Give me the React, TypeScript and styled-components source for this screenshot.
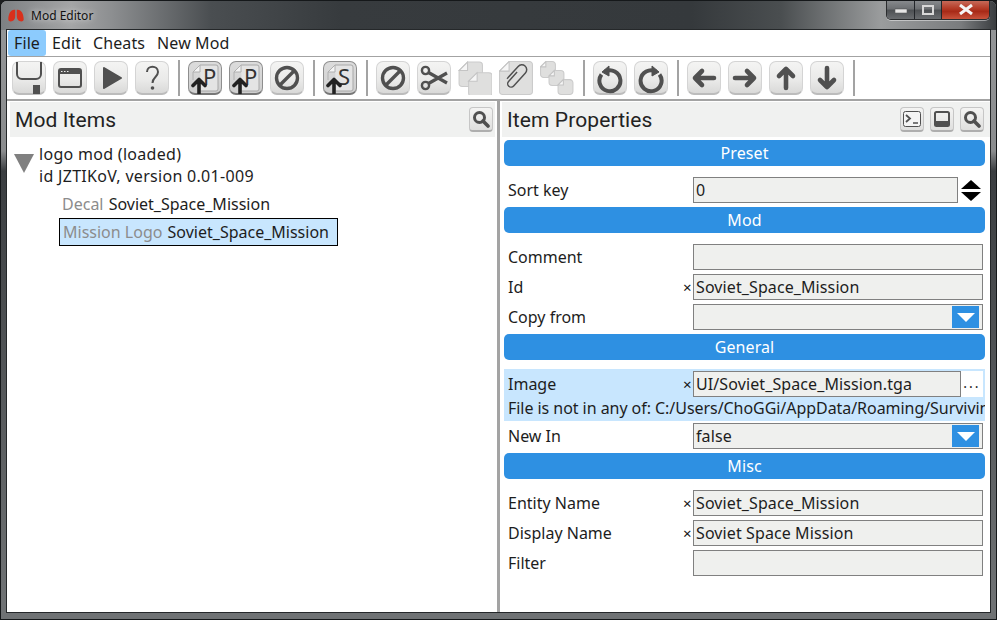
import React from 'react';
import styled, { createGlobalStyle } from 'styled-components';

const Global = createGlobalStyle`
  html, body { margin: 0; padding: 0; background: #1b1d1f; overflow: hidden; }
  body { font-family: "Noto Sans", "Liberation Sans", sans-serif; }
  * { box-sizing: border-box; }
`;

const Win = styled.div`
  width: 997px; height: 620px; display: flex; flex-direction: column;
  border-radius: 7px 7px 0 0; overflow: hidden; position: relative;
  border: 1px solid #15181a;
  background:
    linear-gradient(180deg, rgba(170,172,174,0.85) 0, rgba(150,152,154,0.9) 150px, rgba(60,63,66,0.95) 170px, #6f7274 600px);
`;
const TitleBar = styled.div`
  height: 29px; flex: none; display: flex; align-items: flex-start; justify-content: space-between;
  padding: 0 6px 0 7px;
  background: linear-gradient(90deg, #7d8083 0, #a4a5a6 70px, #8d8f91 110px, #4a4e51 210px, #373b3e 340px, #35393c 690px, #4a4e50 780px, #9a9c9d 880px, #7a7c7e 960px, #3a3d40 100%);
`;
const TitleLeft = styled.div`
  display: flex; align-items: center; gap: 7px; height: 28px; font-size: 12px; color: #111;
  text-shadow: 0 0 6px rgba(255,255,255,.9);
`;
const Controls = styled.div`
  display: flex; height: 20px; margin-top: -1px; border: 1px solid #2a2c2e; border-top: 0; border-radius: 0 0 5px 5px; overflow: hidden;
  box-shadow: 0 1px 0 rgba(255,255,255,.45);
`;
const Ctl = styled.div<{ $w: number; $red?: boolean }>`
  width: ${p => p.$w}px; display: flex; align-items: center; justify-content: center;
  border-right: ${p => (p.$red ? '0' : '1px solid #23262a')};
  background: ${p => p.$red
    ? 'linear-gradient(180deg,#c9705f 0,#b43a26 45%,#a82a17 60%,#c9533c 100%)'
    : 'linear-gradient(180deg,#8a8d90 0,#6d7073 45%,#4e5154 55%,#6a6d70 100%)'};
`;
const Client = styled.div`
  flex: 1; margin: 0 6px 7px 6px; background: #fff; display: flex; flex-direction: column; min-height: 0;
  outline: 1px solid #25282a;
`;
const MenuBar = styled.div`
  height: 27px; flex: none; display: flex; align-items: stretch; padding-left: 1px; border-bottom: 1px solid #a3a3a3; font-size: 16px; color: #1d1d1d;
`;
const Menu = styled.div<{ $on?: boolean }>`
  display: flex; align-items: center; padding: 0 6px; letter-spacing: .1px; height: 26px;
  background: ${p => (p.$on ? '#8ccbfd' : 'transparent')}; border-radius: 3px;
`;
const ToolBar = styled.div`
  height: 44px; flex: none; display: flex; align-items: center; padding: 0 0 0 5px; gap: 7px; border-bottom: 2px solid #a3a3a3;
`;
const Tool = styled.div<{ $down?: boolean }>`
  width: 34px; height: 34px; flex: none; border-radius: 7px; display: flex; align-items: center; justify-content: center;
  background: ${p => p.$down ? 'linear-gradient(180deg,#dcdcdc,#cfcfcf)' : 'linear-gradient(180deg,#f4f4f3 0,#e9e9e8 60%,#d9d9d8 100%)'};
  border: 1px solid ${p => p.$down ? '#8e8e8e' : '#d4d4d4'};
  border-bottom: ${p => p.$down ? '2px solid #777' : '2px solid #bcbcbc'};
`;
const Bare = styled.div`
  width: 34px; height: 34px; flex: none;
`;
const Sep = styled.div`
  width: 2px; height: 36px; background: #a3a3a3; flex: none; margin: 0 1px 0 2px;
`;
const Panes = styled.div`
  flex: 1; display: flex; min-height: 0;
`;
const LeftPane = styled.div`
  width: 490px; flex: none; display: flex; flex-direction: column;
`;
const Splitter = styled.div`
  width: 3px; background: #a3a3a3; flex: none;
`;
const RightPane = styled.div`
  flex: 1; min-width: 0; display: flex; flex-direction: column; overflow: hidden;
`;
const PaneHead = styled.div<{ $left?: boolean }>`
  height: 35px; flex: none; margin: 1px ${p => (p.$left ? '2px' : '0')} 0 ${p => (p.$left ? '3px' : '2px')};
  background: #f0f1f0; display: flex; align-items: center; padding: 0 ${p => (p.$left ? '2px' : '6px')} 0 5px;
`;
const PaneTitle = styled.div`
  flex: 1; font-family: Roboto, "Noto Sans", sans-serif; font-size: 21px; color: #222; letter-spacing: .1px; line-height: 35px; padding-top: 1px;
`;
const HeadBtns = styled.div`
  display: flex; gap: 6px;
`;
const HeadBtn = styled.div`
  width: 24px; height: 25px; border-radius: 4px; border: 1px solid #c6c6c6; border-bottom: 2px solid #aeaeae;
  background: linear-gradient(180deg,#f4f4f3,#dfdfde); display: flex; align-items: center; justify-content: center;
`;
const Tree = styled.div`
  padding: 6px 0 0 7px; font-size: 16px; color: #1d1d1d;
`;
const RootRow = styled.div`
  display: flex; gap: 5px;
`;
const Caret = styled.div`
  width: 0; height: 0; margin-top: 11px; border-left: 10px solid transparent; border-right: 10px solid transparent; border-top: 19px solid #808080;
`;
const RootText = styled.div`
  line-height: 22px; letter-spacing: .3px;
`;
const Item = styled.div<{ $sel?: boolean }>`
  display: inline-block; white-space: nowrap; height: 28px; line-height: 26px; margin-left: ${p => (p.$sel ? '45px' : '44px')};
  padding: 0 8px 0 3px; border: 1px solid ${p => (p.$sel ? '#000' : 'transparent')}; background: ${p => (p.$sel ? '#c8e6fe' : 'transparent')};
`;
const ItemRow = styled.div<{ $top: number }>`
  margin-top: ${p => p.$top}px; height: 28px;
`;
const Kind = styled.span`
  color: #8c8c8c; margin-right: 1px;
`;
const Props = styled.div`
  padding: 3px 5px 0 4px; font-size: 16px; color: #1d1d1d; letter-spacing: .1px; display: flex; flex-direction: column;
`;
const Section = styled.div<{ $mt: number }>`
  height: 26px; border-radius: 5px; background: #2e90e2; color: #fff; display: flex; align-items: center; justify-content: center;
  margin-top: ${p => p.$mt}px; flex: none;
`;
const Row = styled.div<{ $mt: number }>`
  height: 26px; display: flex; align-items: center; flex: none; margin-top: ${p => p.$mt}px; padding-right: 2px;
`;
const Label = styled.div`
  flex: 1; padding-left: 4px; letter-spacing: 0;
`;
const Mark = styled.div`
  width: 10px; font-size: 15px; text-align: left; color: #111;
`;
const Input = styled.div<{ $w: number }>`
  width: ${p => p.$w}px; height: 26px; flex: none; background: #eff0ee; border: 1px solid #808080; padding: 0 2px; line-height: 24px;
  display: flex; justify-content: space-between; align-items: center; white-space: nowrap;
`;
const Drop = styled.div`
  width: 27px; height: 22px; background: #2e90e2; margin-right: 1px; display: flex; align-items: center; justify-content: center;
`;
const DropTri = styled.div`
  width: 0; height: 0; border-left: 9px solid transparent; border-right: 9px solid transparent; border-top: 9px solid #fff;
`;
const Spin = styled.div`
  width: 20px; margin: 0 2px 0 3px; display: flex; flex-direction: column; gap: 3px;
`;
const SpinTri = styled.div<{ $up?: boolean }>`
  width: 0; height: 0; border-left: 10px solid transparent; border-right: 10px solid transparent;
  ${p => (p.$up ? 'border-bottom: 9px solid #000;' : 'border-top: 9px solid #000;')}
`;
const Hi = styled.div`
  margin-top: 9px; height: 52px; background: #c8e6fe; padding: 2px 0 0; flex: none; overflow: hidden;
`;
const HiRow = styled.div`
  height: 26px; display: flex; align-items: center; padding-right: 2px;
`;
const Dots = styled.div`
  width: 22px; height: 26px; background: #fff; text-align: center; line-height: 24px; font-size: 14px; letter-spacing: 2px;
`;
const Note = styled.div`
  padding-left: 4px; white-space: nowrap; line-height: 22px; letter-spacing: -.05px;
`;

const D = '#505050';
const Ic: React.FC<{ children: React.ReactNode; s?: number }> = ({ children, s = 32 }) => (
  <svg width={s} height={s} viewBox="0 0 32 32" fill="none">{children}</svg>
);
const Ban = () => (
  <Ic><circle cx="16" cy="16" r="10.5" stroke={D} strokeWidth="3.4" /><path d="M9 23 23 9" stroke={D} strokeWidth="3.4" /></Ic>
);
const Upload = ({ l }: { l: string }) => (
  <Ic>
    <path d="M11 3H27a2 2 0 0 1 2 2V27a2 2 0 0 1-2 2H12" fill="#e4e4e4" stroke="#a8a8a8" />
    <path d="M4 10 11 3V10Z" fill="#f4f4f4" stroke="#b0b0b0" />
    <path d="M4 10V18" stroke="#b0b0b0" />
    <text x="14" y="23" fontSize="22" fill="#333" fontFamily="Noto Sans, sans-serif">{l}</text>
    <path d="M10 31V19M4 23.500 10 17.500 16 23.500" stroke="#222" strokeWidth="3.600" strokeLinecap="round" strokeLinejoin="round" />
  </Ic>
);
const Page = ({ x, y, w, h, f }: { x: number; y: number; w: number; h: number; f: number }) => (
  <g>
    <path d={`M${x + f} ${y}H${x + w - 3}a3 3 0 0 1 3 3V${y + h - 3}a3 3 0 0 1-3 3H${x + 3}a3 3 0 0 1-3-3V${y + f}Z`} fill="#dfdfde" stroke="#cbcbcb" />
    <path d={`M${x} ${y + f}L${x + f} ${y}V${y + f}Z`} fill="#f6f6f6" stroke="#c4c4c4" />
  </g>
);
const Arrow = ({ d }: { d: string }) => (
  <Ic><path d={d} stroke={D} strokeWidth="4.6" strokeLinecap="round" strokeLinejoin="round" /></Ic>
);
const Search = () => (
  <svg width="18" height="18" viewBox="0 0 18 18" fill="none">
    <circle cx="7.5" cy="7.5" r="5" stroke={D} strokeWidth="3" />
    <path d="M11 11 16 16" stroke={D} strokeWidth="3.6" strokeLinecap="round" />
  </svg>
);

export default function App() {
  return (
    <Win>
      <Global />
      <TitleBar>
        <TitleLeft>
          <svg width="16" height="13" viewBox="0 0 16 13">
            <path d="M7.200 .8C3 0 .3 4.500 .3 10.500c0 2 2.700 2.300 4.200 1.500 2-1 2.700-2.500 2.700-5ZM8.800 .8C13 0 15.700 4.500 15.700 10.500c0 2-2.700 2.300-4.200 1.500-2-1-2.700-2.500-2.700-5Z" fill="#d9301c" />
          </svg>
          <span>Mod Editor</span>
        </TitleLeft>
        <Controls>
          <Ctl $w={28}><svg width="12" height="6"><rect y="2" width="12" height="4" fill="#e6e6e6" stroke="#444" strokeWidth=".5" /></svg></Ctl>
          <Ctl $w={27}><svg width="12" height="10"><rect x="1" y="1" width="10" height="8" fill="none" stroke="#d8d8d8" strokeWidth="2" /></svg></Ctl>
          <Ctl $w={47} $red><svg width="16" height="11"><path d="M2 1 14 10M14 1 2 10" stroke="#f4f4f4" strokeWidth="3" /></svg></Ctl>
        </Controls>
      </TitleBar>
      <Client>
        <MenuBar>
          <Menu $on>File</Menu>
          <Menu>Edit</Menu>
          <Menu>Cheats</Menu>
          <Menu>New Mod</Menu>
        </MenuBar>
        <ToolBar>
          <Tool><Ic><path d="M4 0V12a5 5 0 0 0 5 5H23a5 5 0 0 0 5-5V0" stroke={D} strokeWidth="2" /><rect x="20" y="23" width="7" height="9" fill={D} /></Ic></Tool>
          <Tool><Ic><rect x="5" y="7" width="22" height="18" rx="2" stroke={D} strokeWidth="2" /><rect x="5" y="7" width="22" height="5" fill={D} /><path d="M7 9.500h1.500M10 9.500h1.500M13 9.500h1.500" stroke="#eee" /></Ic></Tool>
          <Tool><Ic><path d="M9 6 26 16 9 26Z" fill={D} stroke={D} strokeWidth="2" strokeLinejoin="round" /></Ic></Tool>
          <Tool><Ic><path d="M11 10c0-7 11-7 11 0 0 5-5.500 5-5.500 11" stroke={D} strokeWidth="2" /><circle cx="16.500" cy="26" r="1.800" fill={D} /></Ic></Tool>
          <Sep />
          <Tool $down><Upload l="P" /></Tool>
          <Tool $down><Upload l="P" /></Tool>
          <Tool><Ban /></Tool>
          <Sep />
          <Tool $down><Upload l="S" /></Tool>
          <Sep />
          <Tool><Ban /></Tool>
          <Tool>
            <Ic>
              <circle cx="7.500" cy="8.500" r="3.600" stroke={D} strokeWidth="2.400" />
              <circle cx="7.500" cy="23.500" r="3.600" stroke={D} strokeWidth="2.400" />
              <path d="M10.500 10.500 29 21M10.500 21.500 29 11" stroke={D} strokeWidth="3.200" />
            </Ic>
          </Tool>
          <Bare>
            <Ic s={34}><Page x={1} y={1} w={22} h={23} f={8} /><Page x={10} y={11} w={22} h={22} f={8} /></Ic>
          </Bare>
          <Bare>
            <Ic s={34}>
              <Page x={0.500} y={0.500} w={31} h={31} f={9} />
              <g transform="rotate(42 16 16)" stroke={D} strokeWidth="1.500">
                <path d="M13 11V24a3.500 3.500 0 0 0 7 0V6a5 5 0 0 0-10 0V22a5 5 0 0 0 0 1" transform="translate(1 1) scale(.92)" />
              </g>
            </Ic>
          </Bare>
          <Bare>
            <Ic s={34}>
              <Page x={0.500} y={0.500} w={14} h={15} f={5} />
              <Page x={8.500} y={9} w={14} h={14} f={5} />
              <Page x={17} y={17.500} w={14} h={14} f={5} />
            </Ic>
          </Bare>
          <Sep />
          <Tool><Ic><path d="M11 9.500a10.500 10.500 0 1 1-3.500 3" stroke={D} strokeWidth="4" /><path d="M8 10 15 4V14Z" fill={D} stroke={D} strokeWidth="1" /></Ic></Tool>
          <Tool><Ic><path d="M21 9.500a10.500 10.500 0 1 0 3.500 3" stroke={D} strokeWidth="4" /><path d="M24 10 17 4V14Z" fill={D} stroke={D} strokeWidth="1" /></Ic></Tool>
          <Sep />
          <Tool><Arrow d="M26 16H7M14 9 7 16 14 23" /></Tool>
          <Tool><Arrow d="M6 16H25M18 9 25 16 18 23" /></Tool>
          <Tool><Arrow d="M16 26V7M9 14 16 7 23 14" /></Tool>
          <Tool><Arrow d="M16 6V25M9 18 16 25 23 18" /></Tool>
          <Sep />
        </ToolBar>
        <Panes>
          <LeftPane>
            <PaneHead $left>
              <PaneTitle>Mod Items</PaneTitle>
              <HeadBtn><Search /></HeadBtn>
            </PaneHead>
            <Tree>
              <RootRow>
                <Caret />
                <RootText>logo mod (loaded)<br />id JZTIKoV, version 0.01-009</RootText>
              </RootRow>
              <ItemRow $top={3}><Item><Kind>Decal</Kind> Soviet_Space_Mission</Item></ItemRow>
              <ItemRow $top={0}><Item $sel><Kind>Mission Logo</Kind> Soviet_Space_Mission</Item></ItemRow>
            </Tree>
          </LeftPane>
          <Splitter />
          <RightPane>
            <PaneHead>
              <PaneTitle>Item Properties</PaneTitle>
              <HeadBtns>
                <HeadBtn>
                  <svg width="18" height="16" viewBox="0 0 18 16" fill="none"><rect x=".5" y=".5" width="17" height="15" rx="2" fill="#f4f4f4" stroke={D} /><path d="M3 4 7 7.500 3 11" stroke={D} strokeWidth="1.800" /><path d="M10 12h5" stroke={D} strokeWidth="1.500" /></svg>
                </HeadBtn>
                <HeadBtn>
                  <svg width="16" height="16" viewBox="0 0 16 16" fill="none"><rect x="1" y="1" width="14" height="14" rx="1.500" stroke={D} strokeWidth="2" /><rect x="1" y="10" width="14" height="5" fill={D} /></svg>
                </HeadBtn>
                <HeadBtn><Search /></HeadBtn>
              </HeadBtns>
            </PaneHead>
            <Props>
              <Section $mt={0}>Preset</Section>
              <Row $mt={11}>
                <Label>Sort key</Label>
                <Input $w={265}>0</Input>
                <Spin><SpinTri $up /><SpinTri /></Spin>
              </Row>
              <Section $mt={4}>Mod</Section>
              <Row $mt={11}><Label>Comment</Label><Input $w={290} /></Row>
              <Row $mt={4}><Label>Id</Label><Mark>×</Mark><Input $w={290}>Soviet_Space_Mission</Input></Row>
              <Row $mt={4}><Label>Copy from</Label><Input $w={290}><span /><Drop><DropTri /></Drop></Input></Row>
              <Section $mt={4}>General</Section>
              <Hi>
                <HiRow>
                  <Label>Image</Label><Mark>×</Mark>
                  <Input $w={268}>UI/Soviet_Space_Mission.tga</Input>
                  <Dots>...</Dots>
                </HiRow>
                <Note>File is not in any of: C:/Users/ChoGGi/AppData/Roaming/Survivin</Note>
              </Hi>
              <Row $mt={2}><Label>New In</Label><Input $w={290}>false<Drop><DropTri /></Drop></Input></Row>
              <Section $mt={4}>Misc</Section>
              <Row $mt={11}><Label>Entity Name</Label><Mark>×</Mark><Input $w={290}>Soviet_Space_Mission</Input></Row>
              <Row $mt={4}><Label>Display Name</Label><Mark>×</Mark><Input $w={290}>Soviet Space Mission</Input></Row>
              <Row $mt={4}><Label>Filter</Label><Input $w={290} /></Row>
            </Props>
          </RightPane>
        </Panes>
      </Client>
    </Win>
  );
}
